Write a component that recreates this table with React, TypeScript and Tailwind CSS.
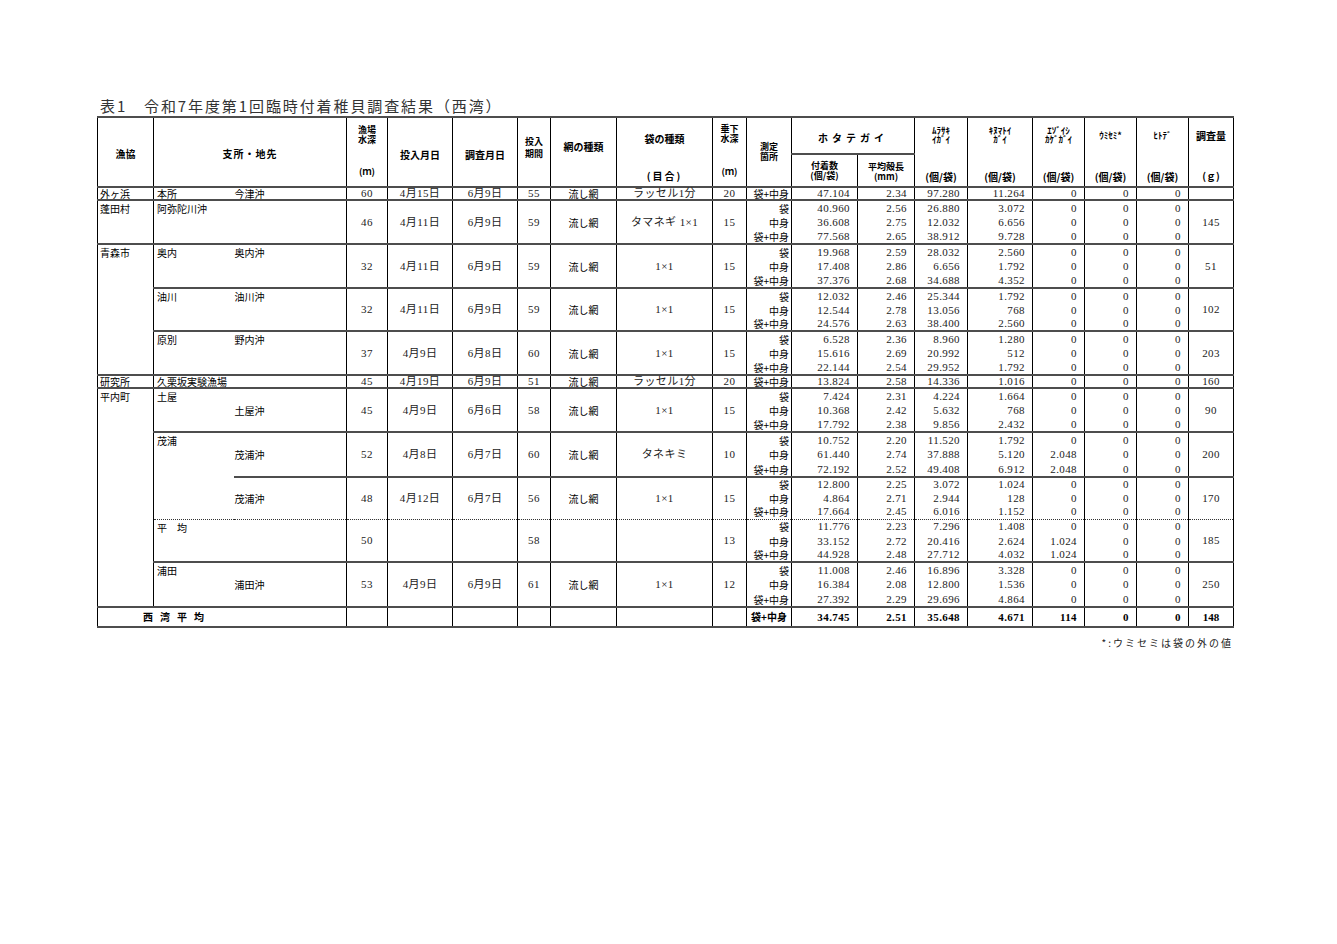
import React from "react"

const JP = "font-['Noto_Sans_CJK_JP',sans-serif]"
const NUM = "font-['Liberation_Serif','Noto_Sans_CJK_JP',serif]"

// 縦線・横線
const BL = "border-l border-l-black"
const THICK = "border-t-2 border-t-[#4d4d4d]"
const DOT = "border-t border-t-[#333] [border-top-style:dotted]"

const HCLS: Record<number, string> = {
  11: "h-[11px]",
  12: "h-[12px]",
  13: "h-[13px]",
  14: "h-[14px]",
  15: "h-[15px]",
  16: "h-[16px]",
}

type Sub = [string, string, string, string, string, string, string, string]

type Block = {
  coop?: { text: string; rows: number }
  shisho?: { text: string; rows: number; span?: boolean }
  chisaki?: { text: string; mid?: boolean }
  depth: string
  put: string
  survey: string
  period: string
  net: string
  bag: string
  smallBag?: boolean
  hang: string
  subs: Sub[]
  weight: string
  heights: number[]
  dotted?: boolean
}

const three = (
  c: [string, string, string],
  l: [string, string, string],
  m: [string, string, string],
  k: [string, string, string],
  e: [string, string, string] = ["0", "0", "0"],
): Sub[] => [
  ["袋", c[0], l[0], m[0], k[0], e[0], "0", "0"],
  ["中身", c[1], l[1], m[1], k[1], e[1], "0", "0"],
  ["袋+中身", c[2], l[2], m[2], k[2], e[2], "0", "0"],
]

const blocks: Block[] = [
  {
    coop: { text: "外ヶ浜", rows: 1 },
    shisho: { text: "本所", rows: 1 },
    chisaki: { text: "今津沖" },
    depth: "60", put: "4月15日", survey: "6月9日", period: "55", net: "流し網", bag: "ラッセル1分", smallBag: true, hang: "20",
    subs: [["袋+中身", "47.104", "2.34", "97.280", "11.264", "0", "0", "0"]],
    weight: "", heights: [12],
  },
  {
    coop: { text: "蓬田村", rows: 3 },
    shisho: { text: "阿弥陀川沖", rows: 3, span: true },
    depth: "46", put: "4月11日", survey: "6月9日", period: "59", net: "流し網", bag: "タマネギ 1×1", smallBag: true, hang: "15",
    subs: three(["40.960", "36.608", "77.568"], ["2.56", "2.75", "2.65"], ["26.880", "12.032", "38.912"], ["3.072", "6.656", "9.728"]),
    weight: "145", heights: [15, 15, 14],
  },
  {
    coop: { text: "青森市", rows: 9 },
    shisho: { text: "奥内", rows: 3 },
    chisaki: { text: "奥内沖" },
    depth: "32", put: "4月11日", survey: "6月9日", period: "59", net: "流し網", bag: "1×1", hang: "15",
    subs: three(["19.968", "17.408", "37.376"], ["2.59", "2.86", "2.68"], ["28.032", "6.656", "34.688"], ["2.560", "1.792", "4.352"]),
    weight: "51", heights: [15, 15, 14],
  },
  {
    shisho: { text: "油川", rows: 3 },
    chisaki: { text: "油川沖" },
    depth: "32", put: "4月11日", survey: "6月9日", period: "59", net: "流し網", bag: "1×1", hang: "15",
    subs: three(["12.032", "12.544", "24.576"], ["2.46", "2.78", "2.63"], ["25.344", "13.056", "38.400"], ["1.792", "768", "2.560"]),
    weight: "102", heights: [15, 14, 14],
  },
  {
    shisho: { text: "原別", rows: 3 },
    chisaki: { text: "野内沖" },
    depth: "37", put: "4月9日", survey: "6月8日", period: "60", net: "流し網", bag: "1×1", hang: "15",
    subs: three(["6.528", "15.616", "22.144"], ["2.36", "2.69", "2.54"], ["8.960", "20.992", "29.952"], ["1.280", "512", "1.792"]),
    weight: "203", heights: [15, 15, 14],
  },
  {
    coop: { text: "研究所", rows: 1 },
    shisho: { text: "久栗坂実験漁場", rows: 1, span: true },
    depth: "45", put: "4月19日", survey: "6月9日", period: "51", net: "流し網", bag: "ラッセル1分", smallBag: true, hang: "20",
    subs: [["袋+中身", "13.824", "2.58", "14.336", "1.016", "0", "0", "0"]],
    weight: "160", heights: [11],
  },
  {
    coop: { text: "平内町", rows: 15 },
    shisho: { text: "土屋", rows: 3 },
    chisaki: { text: "土屋沖", mid: true },
    depth: "45", put: "4月9日", survey: "6月6日", period: "58", net: "流し網", bag: "1×1", hang: "15",
    subs: three(["7.424", "10.368", "17.792"], ["2.31", "2.42", "2.38"], ["4.224", "5.632", "9.856"], ["1.664", "768", "2.432"]),
    weight: "90", heights: [15, 15, 14],
  },
  {
    shisho: { text: "茂浦", rows: 6 },
    chisaki: { text: "茂浦沖", mid: true },
    depth: "52", put: "4月8日", survey: "6月7日", period: "60", net: "流し網", bag: "タネキミ", smallBag: true, hang: "10",
    subs: three(["10.752", "61.440", "72.192"], ["2.20", "2.74", "2.52"], ["11.520", "37.888", "49.408"], ["1.792", "5.120", "6.912"], ["0", "2.048", "2.048"]),
    weight: "200", heights: [15, 15, 15],
  },
  {
    chisaki: { text: "茂浦沖", mid: true },
    depth: "48", put: "4月12日", survey: "6月7日", period: "56", net: "流し網", bag: "1×1", hang: "15",
    subs: three(["12.800", "4.864", "17.664"], ["2.25", "2.71", "2.45"], ["3.072", "2.944", "6.016"], ["1.024", "128", "1.152"]),
    weight: "170", heights: [14, 14, 14],
  },
  {
    shisho: { text: "平　均", rows: 3, span: true },
    depth: "50", put: "", survey: "", period: "58", net: "", bag: "", hang: "13",
    subs: three(["11.776", "33.152", "44.928"], ["2.23", "2.72", "2.48"], ["7.296", "20.416", "27.712"], ["1.408", "2.624", "4.032"], ["0", "1.024", "1.024"]),
    weight: "185", heights: [15, 14, 14], dotted: true,
  },
  {
    shisho: { text: "浦田", rows: 3 },
    chisaki: { text: "浦田沖", mid: true },
    depth: "53", put: "4月9日", survey: "6月9日", period: "61", net: "流し網", bag: "1×1", hang: "12",
    subs: three(["11.008", "16.384", "27.392"], ["2.46", "2.08", "2.29"], ["16.896", "12.800", "29.696"], ["3.328", "1.536", "4.864"]),
    weight: "250", heights: [15, 15, 15],
  },
]

const H = `${BL} text-center font-bold text-[10px] leading-[10px] text-black ${JP}`
const HS = `${BL} text-center font-bold text-[9px] leading-[10px] text-black ${JP}`
const HK = `${BL} text-center font-bold text-[9px] leading-[9px] text-black ${JP}`

function Header() {
  return (
    <thead>
      <tr className="h-[37px]">
        <th rowSpan={2} className={`${H} align-middle pt-[3px]`}>漁協</th>
        <th rowSpan={2} colSpan={2} className={`${H} align-middle pt-[3px] tracking-[1px]`}>支所・地先</th>
        <th rowSpan={2} className={`${HS} align-top`}>
          <div className="pt-[7px]">漁場<br />水深</div>
          <div className="mt-[22px]">(ｍ)</div>
        </th>
        <th rowSpan={2} className={`${H} align-middle pt-[6px]`}>投入月日</th>
        <th rowSpan={2} className={`${H} align-middle pt-[6px]`}>調査月日</th>
        <th rowSpan={2} className={`${HS} align-top`}>
          <div className="pt-[18px] leading-[12px]">投入<br />期間</div>
        </th>
        <th rowSpan={2} className={`${H} align-top`}>
          <div className="pt-[24px]">網の種類</div>
        </th>
        <th rowSpan={2} className={`${H} align-top`}>
          <div className="pt-[16px]">袋の種類</div>
          <div className="mt-[27px] tracking-[2px]">(目合)</div>
        </th>
        <th rowSpan={2} className={`${HS} align-top`}>
          <div className="pt-[6px]">垂下<br />水深</div>
          <div className="mt-[23px]">(ｍ)</div>
        </th>
        <th rowSpan={2} className={`${HS} align-top`}>
          <div className="pt-[24px]">測定<br />箇所</div>
        </th>
        <th colSpan={2} className={`${H} align-middle pt-[4px] tracking-[4px]`}>ホタテガイ</th>
        <th rowSpan={2} className={`${HK} align-top`}>
          <div className="pt-[8px]">ﾑﾗｻｷ<br />ｲｶﾞｲ</div>
          <div className="mt-[28px] text-[10px] leading-[10px]">(個/袋)</div>
        </th>
        <th rowSpan={2} className={`${HK} align-top`}>
          <div className="pt-[8px]">ｷﾇﾏﾄｲ<br />ｶﾞｲ</div>
          <div className="mt-[28px] text-[10px] leading-[10px]">(個/袋)</div>
        </th>
        <th rowSpan={2} className={`${HK} align-top`}>
          <div className="pt-[8px]">ｴｿﾞｲｼ<br />ｶｹﾞｶﾞｲ</div>
          <div className="mt-[28px] text-[10px] leading-[10px]">(個/袋)</div>
        </th>
        <th rowSpan={2} className={`${HK} align-top`}>
          <div className="pt-[13px]">ｳﾐｾﾐ*</div>
          <div className="mt-[32px] text-[10px] leading-[10px]">(個/袋)</div>
        </th>
        <th rowSpan={2} className={`${HK} align-top`}>
          <div className="pt-[13px]">ﾋﾄﾃﾞ</div>
          <div className="mt-[32px] text-[10px] leading-[10px]">(個/袋)</div>
        </th>
        <th rowSpan={2} className={`${H} border-r border-r-black align-top`}>
          <div className="pt-[13px]">調査量</div>
          <div className="mt-[30px]">(ｇ)</div>
        </th>
      </tr>
      <tr className="h-[33px]">
        <th className={`${HS} ${THICK} align-top`}>
          <div className="pt-[6px]">付着数<br />(個/袋)</div>
        </th>
        <th className={`${HS} ${THICK} align-top`}>
          <div className="pt-[7px]">平均殻長<br />(mm)</div>
        </th>
      </tr>
    </thead>
  )
}

const TXT = `${JP} text-[10px] text-black`
const NUMC = `${NUM} text-[11px] tracking-[0.4px] text-[#222]`

function BlockRows({ b }: { b: Block }) {
  const n = b.subs.length
  return (
    <>
      {b.subs.map((s, i) => {
        const first = i === 0
        const top = first ? (b.dotted ? DOT : THICK) : ""
        const lh = n === 1 ? "leading-[11px]" : "leading-[13px]"
        return (
          <tr key={i} className={HCLS[b.heights[i]]}>
            {first && b.coop && (
              <td rowSpan={b.coop.rows} className={`${BL} ${top} ${TXT} align-top pl-[2px] ${n === 1 ? "leading-[11px]" : "pt-[2px] leading-[12px]"}`}>
                {b.coop.text}
              </td>
            )}
            {first && b.shisho && (
              <td
                rowSpan={b.shisho.rows}
                colSpan={b.shisho.span ? 2 : 1}
                className={`${BL} ${top} ${TXT} align-top pl-[3px] whitespace-nowrap ${n === 1 ? "leading-[11px]" : "pt-[2px] leading-[12px]"}`}
              >
                {b.shisho.text}
              </td>
            )}
            {first && b.chisaki && (
              <td
                rowSpan={n}
                className={`${top} ${TXT} pl-[1px] whitespace-nowrap ${b.chisaki.mid ? "align-middle" : n === 1 ? "align-top leading-[11px]" : "align-top pt-[2px] leading-[12px]"}`}
              >
                {b.chisaki.text}
              </td>
            )}
            {first && (
              <>
                <td rowSpan={n} className={`${BL} ${top} ${NUMC} text-[10px] text-center ${lh}`}>{b.depth}</td>
                <td rowSpan={n} className={`${BL} ${top} ${NUMC} text-[10px] text-center ${lh}`}>{b.put}</td>
                <td rowSpan={n} className={`${BL} ${top} ${NUMC} text-[10px] text-center ${lh}`}>{b.survey}</td>
                <td rowSpan={n} className={`${BL} ${top} ${NUMC} text-[10px] text-center ${lh}`}>{b.period}</td>
                <td rowSpan={n} className={`${BL} ${top} ${TXT} text-center ${lh}`}>{b.net}</td>
                <td rowSpan={n} className={`${BL} ${top} ${NUMC} ${b.smallBag ? "text-[9px]" : "text-[10px]"} text-center ${lh} whitespace-nowrap`}>{b.bag}</td>
                <td rowSpan={n} className={`${BL} ${top} ${NUMC} text-[10px] text-center ${lh}`}>{b.hang}</td>
              </>
            )}
            <td className={`${BL} ${top} ${TXT} text-right pr-[2px] ${lh} whitespace-nowrap`}>{s[0]}</td>
            {s.slice(1).map((v, k) => (
              <td key={k} className={`${BL} ${top} ${NUMC} text-right pr-[7px] ${lh}`}>{v}</td>
            ))}
            {first && (
              <td rowSpan={n} className={`${BL} border-r border-r-black ${top} ${NUMC} text-center ${lh}`}>{b.weight}</td>
            )}
          </tr>
        )
      })}
    </>
  )
}

function TotalRow() {
  const c = `${BL} ${THICK} border-b-2 border-b-[#4d4d4d]`
  const v = ["34.745", "2.51", "35.648", "4.671", "114", "0", "0"]
  return (
    <tr className="h-[20px]">
      <td colSpan={3} className={`${c} ${JP} text-[10px] font-bold text-black pl-[45px] tracking-[7px] leading-[12px]`}>西湾平均</td>
      {Array.from({ length: 7 }).map((_, i) => (
        <td key={i} className={c} />
      ))}
      <td className={`${c} ${JP} text-[10px] font-bold text-black text-center leading-[12px] whitespace-nowrap`}>袋+中身</td>
      {v.map((x, i) => (
        <td key={i} className={`${c} ${NUM} text-[11px] tracking-[0.4px] font-bold text-black text-right pr-[7px] leading-[12px]`}>{x}</td>
      ))}
      <td className={`${c} border-r border-r-black ${NUM} text-[11px] font-bold text-black text-center leading-[12px]`}>148</td>
    </tr>
  )
}

const COLS = [56, 80, 113, 41, 65, 65, 33, 66, 96, 34, 45, 66, 57, 53, 65, 52, 52, 52, 45]
const COLCLS: Record<number, string> = {
  33: "w-[33px]",
  34: "w-[34px]",
  41: "w-[41px]",
  45: "w-[45px]",
  52: "w-[52px]",
  53: "w-[53px]",
  56: "w-[56px]",
  57: "w-[57px]",
  65: "w-[65px]",
  66: "w-[66px]",
  80: "w-[80px]",
  96: "w-[96px]",
  113: "w-[113px]",
}

export default function App() {
  return (
    <div className="min-h-screen bg-white pl-[97px] pt-[96px]">
      <div className={`${JP} text-[15px] leading-[20px] h-[20px] tracking-[1.9px] text-[#333] pl-[3px]`}>
        表1　令和7年度第1回臨時付着稚貝調査結果（西湾）
      </div>
      <table className="table-fixed border-collapse w-[1136px] border-t-2 border-t-[#4d4d4d]">
        <colgroup>
          {COLS.map((w, i) => (
            <col key={i} className={COLCLS[w]} />
          ))}
        </colgroup>
        <Header />
        <tbody>
          {blocks.map((b, i) => (
            <BlockRows key={i} b={b} />
          ))}
          <TotalRow />
        </tbody>
      </table>
      <div className={`w-[1136px] text-right ${JP} text-[10px] leading-[12px] tracking-[2px] text-[#222] mt-[9px]`}>
        *:ウミセミは袋の外の値
      </div>
    </div>
  )
}
